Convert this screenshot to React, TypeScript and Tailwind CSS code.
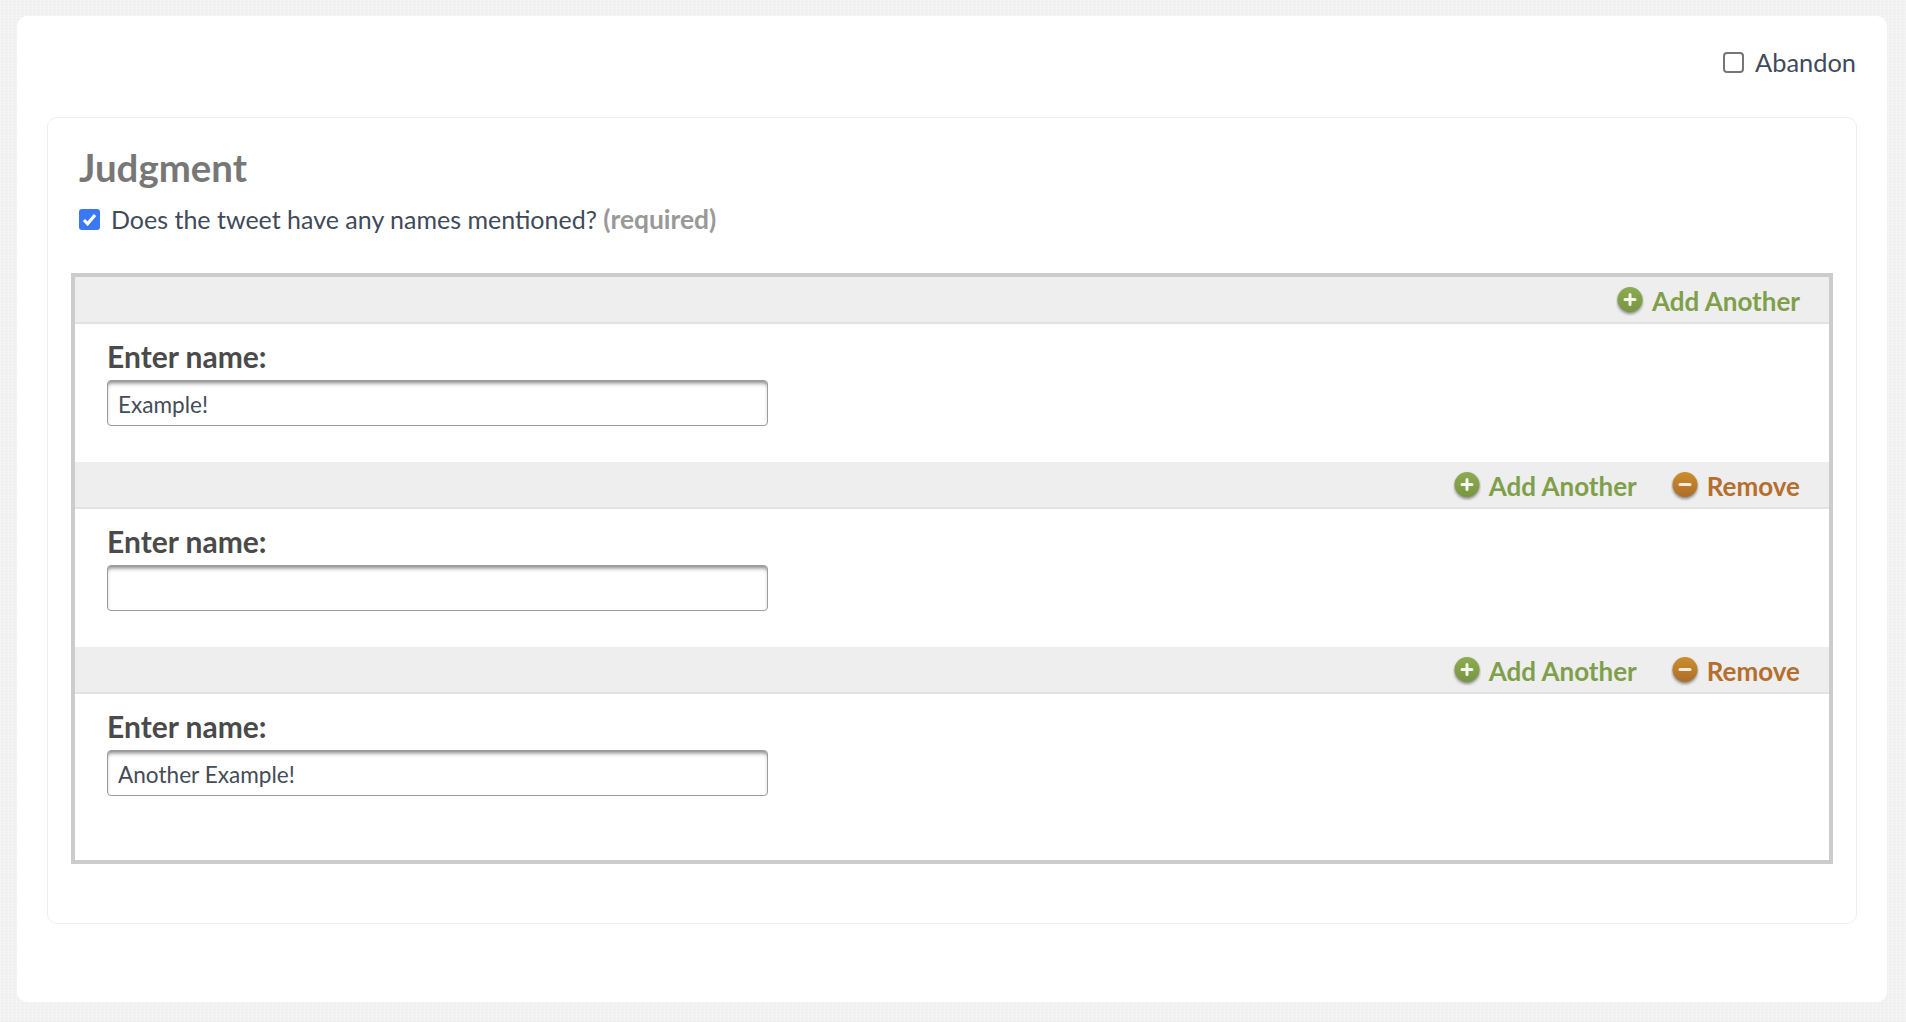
function CircleIcon({ kind }: { kind: 'add' | 'remove' }) {
  const id = kind === 'add' ? 'grad-add' : 'grad-remove'
  const top = kind === 'add' ? '#8dab50' : '#cc8e2e'
  const bottom = kind === 'add' ? '#789640' : '#ae6d29'
  return (
    <svg width="28" height="30" viewBox="0 0 28 30" className="shrink-0">
      <defs>
        <linearGradient id={id} x1="0" y1="0" x2="0" y2="1">
          <stop offset="0" stopColor={top} />
          <stop offset="1" stopColor={bottom} />
        </linearGradient>
        <filter id={id + '-blur'} x="-30%" y="-30%" width="160%" height="160%">
          <feGaussianBlur stdDeviation="1.6" />
        </filter>
      </defs>
      <circle cx="14" cy="15.5" r="12.5" fill="#444" opacity="0.6" filter={`url(#${id}-blur)`} />
      <circle cx="14" cy="13.5" r="12.5" fill={`url(#${id})`} />
      {kind === 'add' ? (
        <path d="M14 8.5v10M9 13.5h10" stroke="#fff" strokeWidth="3" strokeLinecap="round" opacity="0.92" />
      ) : (
        <path d="M9 13.5h10" stroke="#fff" strokeWidth="3" strokeLinecap="round" opacity="0.85" />
      )}
    </svg>
  )
}

function ActionBar({ showRemove }: { showRemove: boolean }) {
  return (
    <div className="flex h-[47px] items-center justify-end gap-[34px] border-b-2 border-[#e2e2e2] bg-[#eeeeee] pr-[29px] pt-[2px]">
      <a className="flex items-center gap-[8px] text-[26px] font-bold leading-none text-[#7f9f4b]">
        <CircleIcon kind="add" />
        <span>Add Another</span>
      </a>
      {showRemove && (
        <a className="flex items-center gap-[8px] text-[26px] font-bold leading-none text-[#b46f2e]">
          <CircleIcon kind="remove" />
          <span>Remove</span>
        </a>
      )}
    </div>
  )
}

function NameRow({ value, showRemove }: { value: string; showRemove: boolean }) {
  return (
    <div>
      <ActionBar showRemove={showRemove} />
      <div className="pl-[32px] pt-[9px]">
        <div className="text-[30px] font-bold leading-[47px] text-[#4a4a4a]">Enter name:</div>
        <input
          readOnly
          value={value}
          className="h-[46px] w-[661px] rounded-[4px] border border-[#9b9ba1] bg-white px-[10px] pt-[3px] text-[22.6px] text-[#444c57] shadow-[inset_0_4px_4px_-2px_rgba(0,0,0,0.5)] outline-none"
        />
      </div>
    </div>
  )
}

export default function App() {
  return (
    <div className="min-h-[1022px] bg-[#f2f2f2] bg-[repeating-linear-gradient(0deg,rgba(0,0,0,0.012)_0_1px,transparent_1px_3px),repeating-linear-gradient(90deg,rgba(255,255,255,0.25)_0_1px,transparent_1px_4px)] pb-[20px] pl-[17px] pr-[19px] pt-[16px] font-['Lato',sans-serif]">
      <div className="h-[986px] rounded-[10px] bg-white px-[30px]">
        {/* Abandon */}
        <div className="flex h-[101px] items-start justify-end pr-[1px] pt-[30px]">
          <label className="flex items-center gap-[11px] text-[25.4px] leading-[32px] text-[#3f4a5a]">
            <span className="h-[21px] w-[21px] rounded-[4px] border-2 border-[#767676] bg-white" />
            Abandon
          </label>
        </div>

        <div className="h-[807px] rounded-[10px] border border-[#eeeeee] px-[23px]">
          <div className="pl-[8px] pt-[26px]">
            <h2 className="text-[38.4px] font-bold leading-[46px] text-[#777777]">Judgment</h2>
            <label className="mt-[9px] flex items-center gap-[11px] text-[25px] leading-[40px] text-[#3f4a5a]">
              <span className="flex h-[21px] w-[21px] items-center justify-center rounded-[3px] bg-[#3b78f6]">
                <svg width="15" height="13" viewBox="0 0 15 13">
                  <path d="M2 7l3.6 3.8L13 2" fill="none" stroke="#fff" strokeWidth="3.2" />
                </svg>
              </span>
              <span>
                Does the tweet have any names mentioned?{' '}
                <span className="text-[26.4px] font-bold text-[#999999]">(required)</span>
              </span>
            </label>
          </div>

          <div className="mt-[34px] h-[591px] border-4 border-[#cccccc]">
            <div className="flex flex-col gap-[36px]">
              <NameRow value="Example!" showRemove={false} />
              <NameRow value="" showRemove={true} />
              <NameRow value="Another Example!" showRemove={true} />
            </div>
          </div>
        </div>
      </div>
    </div>
  )
}
